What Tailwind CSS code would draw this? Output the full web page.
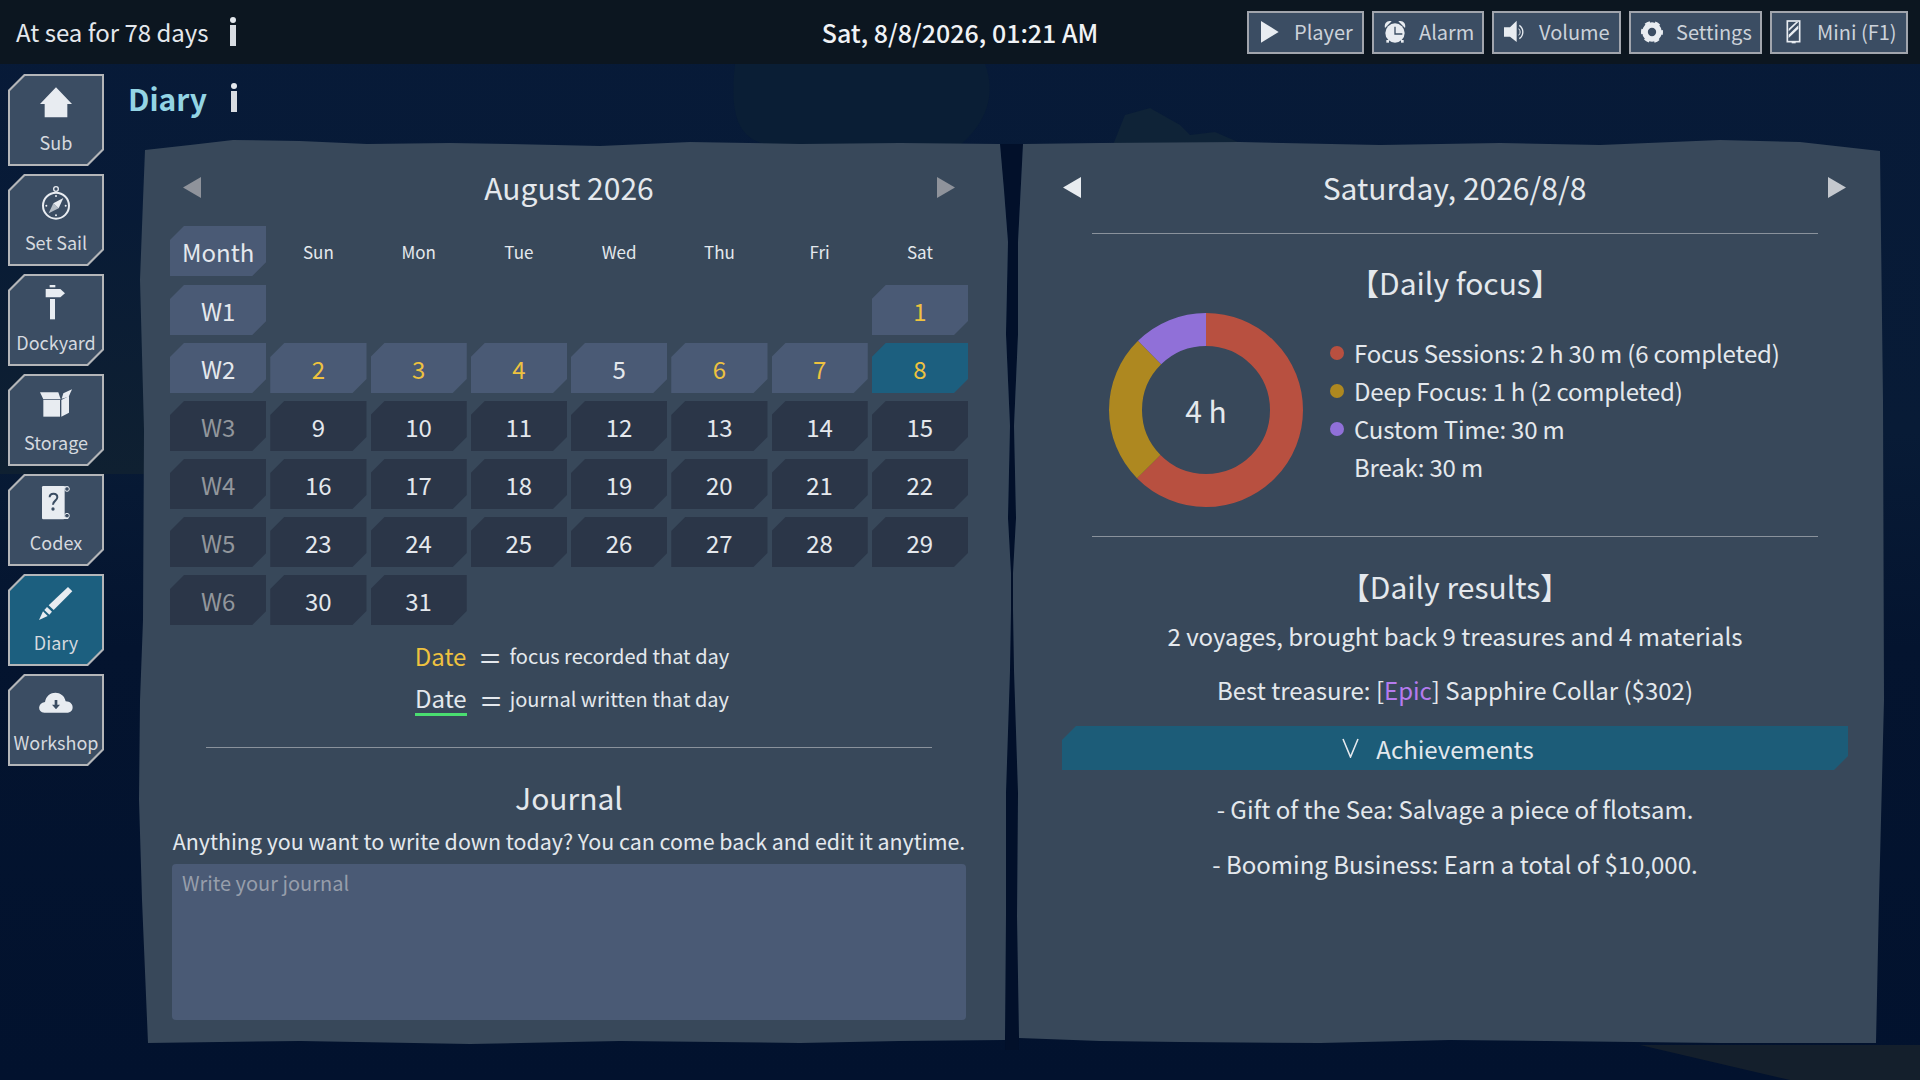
<!DOCTYPE html>
<html lang="en">
<head>
  <meta charset="UTF-8">
  <title>Diary</title>
  <script src="https://cdn.jsdelivr.net/npm/@tailwindcss/browser@4"></script>
</head>
<body class="bg-[#041633] font-['Noto_Sans_CJK_SC','Noto_Sans',sans-serif] text-[#e4e8ed]">
<div class="relative w-[1920px] h-[1080px] overflow-hidden">

  <!-- backdrop and torn diary pages -->
  <svg class="absolute inset-0" width="1920" height="1080" viewBox="0 0 1920 1080">
    <defs>
      <linearGradient id="sea" x1="0" y1="0" x2="0" y2="1">
        <stop offset="0" stop-color="#071a38"/>
        <stop offset="0.4" stop-color="#081b36"/>
        <stop offset="0.6" stop-color="#04142f"/>
        <stop offset="1" stop-color="#02122e"/>
      </linearGradient>
      <linearGradient id="rail" x1="0" y1="0" x2="0" y2="1">
        <stop offset="0" stop-color="#081b36"/>
        <stop offset="1" stop-color="#0f2031"/>
      </linearGradient>
    </defs>
    <rect width="1920" height="1080" fill="url(#sea)"/>
    <rect y="220" width="146" height="254" fill="url(#rail)"/>
    <path d="M735,64 C730,110 735,140 770,145 L960,145 C990,120 995,90 985,64 Z" fill="#0a1e35"/>
    <path d="M1113,145 L1125,115 L1150,108 L1180,125 L1190,135 L1215,132 L1245,145 Z" fill="#0f2337"/>
    <path d="M1640,1045 L1920,1045 L1920,1080 L1790,1080 Z" fill="#141f2c"/>
    <path d="M1000,144 L1023,144 L1018,242 L1018,334 L1014,426 L1016,518 L1013,573 L1013,610 L1014,671 L1016,732 L1018,793 L1017,916 L1019,1050 L1005,1050 L1006,916 L1006,793 L1008,732 L1010,671 L1011,610 L1011,573 L1008,518 L1010,426 L1006,334 L1008,242 Z" fill="#02102a"/>
    <path fill="#38485a" d="M145,150 L190,145 233,140 300,141 367,144 450,143 510,144 600,146 690,142 800,144 900,143 1000,144 1004,190 1008,242 1006,334 1010,426 1008,518 1011,573 1011,610 1010,671 1008,732 1006,793 1006,916 1005,1040 900,1041 800,1043 620,1041 470,1044 300,1041 148,1043 142,900 139,800 140,700 143,620 144,430 140,280 143,200 Z"/>
    <path fill="#38485a" d="M1023,144 L1100,143 1240,142 1380,145 1500,143 1600,145 1720,140 1800,142 1880,151 1883,400 1884,700 1879,900 1876,1043 1720,1043 1450,1040 1320,1043 1180,1042 1100,1041 1019,1038 1017,916 1018,793 1016,732 1014,671 1013,610 1013,573 1016,518 1014,426 1018,334 1018,242 Z"/>
  </svg>

  <div class="relative flex flex-col h-full">
    <!-- top bar -->
    <header class="relative flex items-center justify-between h-16 pl-4 pr-3 bg-[#0c1620]">
      <div class="flex items-center">
        <span class="text-[24px] leading-[32px]">At sea for 78 days</span>
        <svg class="ml-[20px]" width="8" height="32" viewBox="0 0 8 32"><circle cx="4" cy="4" r="3" fill="#e4e8ed"/><rect x="1" y="9" width="6" height="21" fill="#d8dce2"/></svg>
      </div>
      <div class="absolute left-0 right-0 text-center text-[25px] leading-[32px] font-medium text-[#f0f2f5]">Sat, 8/8/2026, 01:21 AM</div>
      <nav class="relative flex gap-2 text-[20px] leading-[30px] text-[#ccd2da] *:flex *:items-center *:h-[43px] *:pl-[7px] *:gap-[10px] *:border-2 *:border-[#a1a5ad] *:bg-[#3b4d63]">
        <button class="w-[117px]">
          <svg width="28" height="28" viewBox="45 36 84 84"><polygon points="60,45 113,78 60,110" fill="#e8ecf1"/></svg>
          Player
        </button>
        <button class="w-[112px]">
          <svg width="28" height="28" viewBox="418 40 84 84"><g fill="#e8ecf1"><circle cx="460" cy="85" r="29"/><path d="M430,70 C426,55 438,45 450,50 Z"/><path d="M490,70 C494,55 482,45 470,50 Z"/><rect x="434" y="106" width="8" height="8"/><rect x="478" y="106" width="8" height="8"/></g><path d="M460,66 L460,88 L482,88" fill="none" stroke="#3b4d63" stroke-width="4"/></svg>
          Alarm
        </button>
        <button class="w-[129px]">
          <svg width="28" height="28" viewBox="783 40 84 84"><polygon points="792,68 810,68 830,48 830,112 810,96 792,96" fill="#e8ecf1"/><path d="M838,62 C852,72 852,92 838,102" fill="none" stroke="#e8ecf1" stroke-width="4"/><path d="M836,72 C842,78 842,86 836,92" fill="none" stroke="#e8ecf1" stroke-width="3"/></svg>
          Volume
        </button>
        <button class="w-[133px]">
          <svg width="28" height="28" viewBox="55 40 84 84"><circle cx="97" cy="82" r="21" fill="none" stroke="#e8ecf1" stroke-width="17"/><circle cx="97" cy="82" r="29" fill="none" stroke="#e8ecf1" stroke-width="8" stroke-dasharray="15 15.4" stroke-dashoffset="7"/></svg>
          Settings
        </button>
        <button class="w-[138px]">
          <svg width="28" height="28" viewBox="476 40 84 84"><rect x="501" y="49" width="37" height="62" fill="none" stroke="#e8ecf1" stroke-width="5"/><path d="M505,72 L527,52 L534,52 L505,80 Z M505,90 L534,62 L534,72 L505,100 Z" fill="#e8ecf1"/><rect x="514" y="111" width="12" height="5" fill="#e8ecf1"/></svg>
          Mini (F1)
        </button>
      </nav>
    </header>

    <div class="flex flex-1">
      <!-- left rail -->
      <aside class="flex flex-col gap-2 w-[145px] pl-2 pt-[10px] text-[18px] leading-[24px] text-[#d5d9df] *:block *:w-[96px] *:h-[92px] *:p-[2px] *:bg-[#b4b6b9] *:[clip-path:polygon(16px_0,100%_0,100%_calc(100%-16px),calc(100%-16px)_100%,0_100%,0_16px)]">
        <a>
          <div class="flex flex-col items-center h-full pt-[6px] bg-[#3b4d63] [clip-path:polygon(15px_0,100%_0,100%_calc(100%-15px),calc(100%-15px)_100%,0_100%,0_15px)]">
            <svg width="40" height="40" viewBox="108 246 120 120"><path d="M168,262 L216,312 L202,312 L202,352 L134,352 L134,312 L120,312 Z" fill="#e8ecf1"/></svg>
            <span class="mt-[8px]">Sub</span>
          </div>
        </a>
        <a>
          <div class="flex flex-col items-center h-full pt-[6px] bg-[#3b4d63] [clip-path:polygon(15px_0,100%_0,100%_calc(100%-15px),calc(100%-15px)_100%,0_100%,0_15px)]">
            <svg width="40" height="40" viewBox="108 546 120 120"><g fill="none" stroke="#e8ecf1"><circle cx="168" cy="617" r="39" stroke-width="6"/><circle cx="168" cy="567" r="7" stroke-width="4"/></g><polygon points="190,594 176,625 160,610" fill="#e8ecf1"/><polygon points="146,640 160,610 176,625" fill="#e8ecf1" opacity="0.7"/><g fill="#e8ecf1"><circle cx="168" cy="588" r="3"/><circle cx="168" cy="646" r="3"/><circle cx="139" cy="617" r="3"/><circle cx="197" cy="617" r="3"/></g></svg>
            <span class="mt-[8px]">Set Sail</span>
          </div>
        </a>
        <a>
          <div class="flex flex-col items-center h-full pt-[6px] bg-[#3b4d63] [clip-path:polygon(15px_0,100%_0,100%_calc(100%-15px),calc(100%-15px)_100%,0_100%,0_15px)]">
            <svg width="40" height="40" viewBox="108 846 120 120"><g fill="#e8ecf1"><rect x="149" y="855" width="17" height="7"/><polygon points="137,867 181,867 195,880 181,892 137,892"/><rect x="150" y="897" width="15" height="61"/></g></svg>
            <span class="mt-[8px]">Dockyard</span>
          </div>
        </a>
        <a>
          <div class="flex flex-col items-center h-full pt-[6px] bg-[#3b4d63] [clip-path:polygon(15px_0,100%_0,100%_calc(100%-15px),calc(100%-15px)_100%,0_100%,0_15px)]">
            <svg width="40" height="40" viewBox="108 66 120 120"><g fill="#e8ecf1"><polygon points="120,97 175,97 182,118 130,118"/><rect x="130" y="120" width="50" height="50"/><polygon points="184,120 207,108 207,158 184,170"/><polygon points="185,116 190,100 216,88 206,110"/></g></svg>
            <span class="mt-[8px]">Storage</span>
          </div>
        </a>
        <a>
          <div class="flex flex-col items-center h-full pt-[6px] bg-[#3b4d63] [clip-path:polygon(15px_0,100%_0,100%_calc(100%-15px),calc(100%-15px)_100%,0_100%,0_15px)]">
            <svg width="40" height="40" viewBox="108 246 120 120"><rect x="126" y="258" width="68" height="100" rx="4" fill="#e8ecf1"/><path d="M190,262 H205 M190,354 H205" stroke="#e8ecf1" stroke-width="6"/><circle cx="201" cy="267" r="7" fill="#3b4d63" stroke="#e8ecf1" stroke-width="3"/><circle cx="201" cy="347" r="7" fill="#3b4d63" stroke="#e8ecf1" stroke-width="3"/><path d="M149,292 C149,278 172,278 172,292 C172,302 159,302 159,314" fill="none" stroke="#3b4d63" stroke-width="6"/><circle cx="159" cy="327" r="5" fill="#3b4d63"/></svg>
            <span class="mt-[8px]">Codex</span>
          </div>
        </a>
        <a>
          <div class="flex flex-col items-center h-full pt-[6px] bg-[#1c5f7f] [clip-path:polygon(15px_0,100%_0,100%_calc(100%-15px),calc(100%-15px)_100%,0_100%,0_15px)]">
            <svg width="40" height="40" viewBox="108 546 120 120"><g fill="#e8ecf1"><polygon points="204,561 217,574 161,630 146,616"/><polygon points="141,621 156,635 148,644 133,630"/><polygon points="129,634 143,648 117,660"/></g></svg>
            <span class="mt-[8px]">Diary</span>
          </div>
        </a>
        <a>
          <div class="flex flex-col items-center h-full pt-[6px] bg-[#3b4d63] [clip-path:polygon(15px_0,100%_0,100%_calc(100%-15px),calc(100%-15px)_100%,0_100%,0_15px)]">
            <svg width="40" height="40" viewBox="108 846 120 120"><path d="M133,938 C112,938 112,908 135,906 C140,870 190,868 197,904 C224,904 224,938 203,938 Z" fill="#e8ecf1"/><path d="M164,900 H172 V914 H180 L168,928 L156,914 H164 Z" fill="#3b4d63"/></svg>
            <span class="mt-[8px]">Workshop</span>
          </div>
        </a>
      </aside>

      <main class="flex flex-col flex-1">
        <div class="flex items-center h-[79px] pb-[11px]">
          <span class="ml-[-17px] text-[30px] leading-[44px] font-bold text-[#93d4e4]">Diary</span>
          <svg class="ml-[23px]" width="8" height="32" viewBox="0 0 8 32"><circle cx="4" cy="4" r="3" fill="#e4e8ed"/><rect x="1" y="9" width="6" height="21" fill="#d8dce2"/></svg>
        </div>

        <div class="flex">
          <!-- left page: calendar and journal -->
          <section class="w-[868px] pl-[25px]">
            <div class="w-[798px]">
              <div class="flex items-center justify-between h-[44px] mt-[22px] mb-[17px] px-[13px]">
                <svg width="18" height="21" viewBox="0 0 18 21"><polygon points="18,0 18,21 0,10.5" fill="#8f939b"/></svg>
                <h2 class="text-[30px] leading-[44px]">August 2026</h2>
                <svg width="18" height="21" viewBox="0 0 18 21"><polygon points="0,0 0,21 18,10.5" fill="#8f939b"/></svg>
              </div>

              <div class="grid grid-cols-8 gap-x-1 gap-y-2 text-[24px] *:flex *:items-center *:justify-center *:h-[50px] *:pt-[2px] [&>div]:[clip-path:polygon(14px_0,100%_0,100%_calc(100%-14px),calc(100%-14px)_100%,0_100%,0_14px)]">
                <div class="bg-[#4a5a75] mb-px">Month</div>
                <span class="text-[17px]">Sun</span><span class="text-[17px]">Mon</span><span class="text-[17px]">Tue</span><span class="text-[17px]">Wed</span><span class="text-[17px]">Thu</span><span class="text-[17px]">Fri</span><span class="text-[17px]">Sat</span>

                <div class="bg-[#4a5a75]">W1</div>
                <span></span><span></span><span></span><span></span><span></span><span></span>
                <div class="bg-[#4a5a75] text-[#eec23f]">1</div>

                <div class="bg-[#4a5a75]">W2</div>
                <div class="bg-[#4a5a75] text-[#eec23f]">2</div>
                <div class="bg-[#4a5a75] text-[#eec23f]">3</div>
                <div class="bg-[#4a5a75] text-[#eec23f]">4</div>
                <div class="bg-[#4a5a75]">5</div>
                <div class="bg-[#4a5a75] text-[#eec23f]">6</div>
                <div class="bg-[#4a5a75] text-[#eec23f]">7</div>
                <div class="bg-[#1c5f7f] text-[#eec23f]">8</div>

                <div class="bg-[#2b3648] text-[#92969c]">W3</div>
                <div class="bg-[#2b3648]">9</div>
                <div class="bg-[#2b3648]">10</div>
                <div class="bg-[#2b3648]">11</div>
                <div class="bg-[#2b3648]">12</div>
                <div class="bg-[#2b3648]">13</div>
                <div class="bg-[#2b3648]">14</div>
                <div class="bg-[#2b3648]">15</div>

                <div class="bg-[#2b3648] text-[#92969c]">W4</div>
                <div class="bg-[#2b3648]">16</div>
                <div class="bg-[#2b3648]">17</div>
                <div class="bg-[#2b3648]">18</div>
                <div class="bg-[#2b3648]">19</div>
                <div class="bg-[#2b3648]">20</div>
                <div class="bg-[#2b3648]">21</div>
                <div class="bg-[#2b3648]">22</div>

                <div class="bg-[#2b3648] text-[#92969c]">W5</div>
                <div class="bg-[#2b3648]">23</div>
                <div class="bg-[#2b3648]">24</div>
                <div class="bg-[#2b3648]">25</div>
                <div class="bg-[#2b3648]">26</div>
                <div class="bg-[#2b3648]">27</div>
                <div class="bg-[#2b3648]">28</div>
                <div class="bg-[#2b3648]">29</div>

                <div class="bg-[#2b3648] text-[#92969c]">W6</div>
                <div class="bg-[#2b3648]">30</div>
                <div class="bg-[#2b3648]">31</div>
              </div>

              <div class="flex flex-col items-center gap-[11px] mt-[15px] pl-[6px]">
                <div class="flex items-center h-[32px]">
                  <span class="text-[24px] text-[#eec23f]">Date</span>
                  <span class="ml-[16px] text-[29px] leading-[32px] scale-x-125">=</span>
                  <span class="ml-[11px] text-[20px]">focus recorded that day</span>
                </div>
                <div class="flex items-center h-[32px]">
                  <span class="text-[24px] leading-[30px] border-b-[3px] border-[#4ade70]">Date</span>
                  <span class="ml-[16px] text-[29px] leading-[32px] scale-x-125">=</span>
                  <span class="ml-[11px] text-[20px]">journal written that day</span>
                </div>
              </div>

              <div class="h-px mt-[32px] mx-[36px] bg-[#8a929c]"></div>
              <h3 class="mt-[27px] text-center text-[30px] leading-[44px]">Journal</h3>
              <p class="mt-[4px] text-center text-[21.4px] leading-[36px] whitespace-nowrap">Anything you want to write down today? You can come back and edit it anytime.</p>
              <textarea class="block w-[794px] h-[156px] mt-[5px] ml-[2px] px-[10px] py-[4px] rounded-[4px] bg-[#4a5a75] text-[20px] leading-[30px] placeholder:text-[#979eab] outline-none resize-none" placeholder="Write your journal"></textarea>
            </div>
          </section>

          <!-- right page: day summary -->
          <section class="w-[835px] pl-[49px]">
            <div class="w-[786px]">
              <div class="flex items-center justify-between h-[44px] mt-[22px] mb-px">
                <svg class="ml-[1px]" width="18" height="21" viewBox="0 0 18 21"><polygon points="18,0 18,21 0,10.5" fill="#e8ecf0"/></svg>
                <h2 class="text-[30px] leading-[44px]">Saturday, 2026/8/8</h2>
                <svg class="mr-[2px]" width="18" height="21" viewBox="0 0 18 21"><polygon points="0,0 0,21 18,10.5" fill="#c4c8ce"/></svg>
              </div>
              <div class="h-px mt-[24px] mx-[30px] bg-[#8a929c]"></div>

              <h3 class="mt-[26px] text-center text-[30px] leading-[44px]">【Daily focus】</h3>
              <div class="flex items-center h-[194px] mt-[9px] ml-[47px]">
                <div class="relative w-[194px] h-[194px]">
                  <svg width="194" height="194" viewBox="0 0 194 194" class="-rotate-90">
                    <circle cx="97" cy="97" r="80.5" fill="none" stroke="#b85040" stroke-width="33" stroke-dasharray="316.1 505.8"/>
                    <circle cx="97" cy="97" r="80.5" fill="none" stroke="#ae8820" stroke-width="33" stroke-dasharray="126.5 505.8" stroke-dashoffset="-316.1"/>
                    <circle cx="97" cy="97" r="80.5" fill="none" stroke="#9070d8" stroke-width="33" stroke-dasharray="63.2 505.8" stroke-dashoffset="-442.6"/>
                  </svg>
                  <span class="absolute inset-0 flex items-center justify-center text-[30px]">4 h</span>
                </div>
                <ul class="ml-[27px] text-[24px] tracking-[-0.2px] leading-[38px] whitespace-nowrap">
                  <li class="flex items-center gap-[10px]"><i class="w-[14px] h-[14px] rounded-full bg-[#b85040]"></i>Focus Sessions: 2 h 30 m (6 completed)</li>
                  <li class="flex items-center gap-[10px]"><i class="w-[14px] h-[14px] rounded-full bg-[#ae8820]"></i>Deep Focus: 1 h (2 completed)</li>
                  <li class="flex items-center gap-[10px]"><i class="w-[14px] h-[14px] rounded-full bg-[#9070d8]"></i>Custom Time: 30 m</li>
                  <li class="pl-[24px]">Break: 30 m</li>
                </ul>
              </div>
              <div class="h-px mt-[29px] mx-[30px] bg-[#8a929c]"></div>

              <h3 class="mt-[27px] text-center text-[30px] leading-[44px]">【Daily results】</h3>
              <p class="mt-[10px] text-center text-[24px] leading-[36px]">2 voyages, brought back 9 treasures and 4 materials</p>
              <p class="mt-[18px] text-center text-[24px] leading-[36px]">Best treasure: [<span class="text-[#b57bee]">Epic</span>] Sapphire Collar ($302)</p>
              <div class="flex items-center justify-center h-[44px] mt-[18px] pt-[1px] bg-[#1c5c78] text-[24px] leading-[36px] [clip-path:polygon(14px_0,100%_0,100%_calc(100%-14px),calc(100%-14px)_100%,0_100%,0_14px)]">
                <span class="relative">
                  <svg class="absolute left-[-35px] top-[7px]" width="19" height="20" viewBox="0 0 19 20"><path d="M2,1 L9.5,19 L17,1" fill="none" stroke="#e4e8ed" stroke-width="1.6"/></svg>
                  Achievements
                </span>
              </div>
              <p class="mt-[21px] text-center text-[24px] leading-[36px]">- Gift of the Sea: Salvage a piece of flotsam.</p>
              <p class="mt-[19px] text-center text-[24px] leading-[36px]">- Booming Business: Earn a total of $10,000.</p>
            </div>
          </section>
        </div>
      </main>
    </div>
  </div>
</div>
</body>
</html>
